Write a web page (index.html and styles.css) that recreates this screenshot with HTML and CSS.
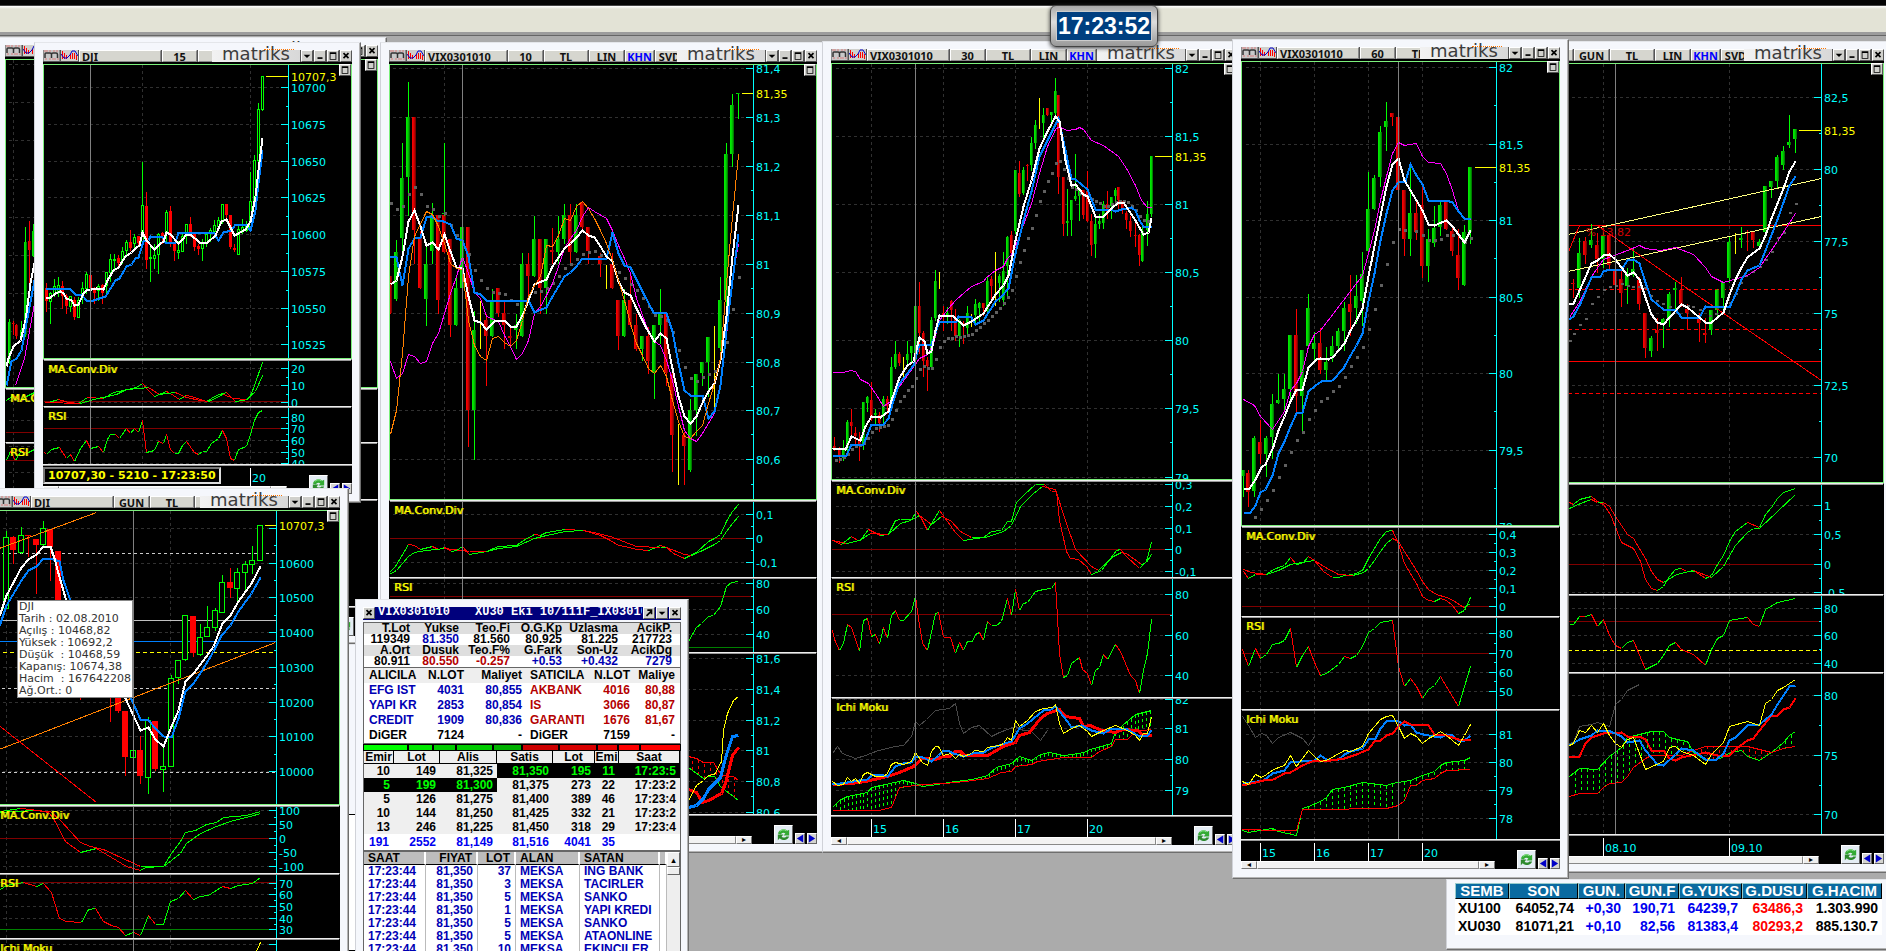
FILE: index.html
```html
<!DOCTYPE html>
<html lang="tr">
<head>
  <meta charset="UTF-8"/>
  <meta name="viewport" content="width=device-width, initial-scale=1.0"/>
  <title>Matriks - VIX / DJI</title>
  <link rel="stylesheet" href="styles.css">
</head>
<body>
<svg class="defs" width="0" height="0" aria-hidden="true">
  <defs>
    <linearGradient id="up"><stop offset="0" stop-color="#00f000"/><stop offset=".5" stop-color="#00d000"/><stop offset="1" stop-color="#006000"/></linearGradient>
    <linearGradient id="down"><stop offset="0" stop-color="#ff0000"/><stop offset=".5" stop-color="#d80000"/><stop offset="1" stop-color="#600000"/></linearGradient>
    <symbol id="i-m" viewBox="0 0 16 11">
      <rect width="16" height="11" fill="#c8c8c8"/>
      <path d="M1 1h3M6 1h2M10 1h1M13 1h1M2 9h2M6 9h2M9 9h4M14 9h1" stroke="#e33" stroke-dasharray="1 1"/>
      <path d="M1.500 8V4q0-1 1-1h4q1.500 0 1.500 1.500V8M8 4.500Q8 3 9.500 3h3q1.500 0 1.500 1.500V8" fill="none" stroke="#333" stroke-width="1.500"/>
    </symbol>
    <symbol id="i-wave" viewBox="0 0 17 11">
      <rect width="17" height="11" fill="#d0d0cc"/>
      <path d="M1.500 1v8M3.500 3v6M5.500 5v4M9.500 4v5M11.500 3v6M13.500 3v6M15.500 5v5" stroke="#f00"/>
      <path d="M0 4l3 4 3 0 3-3 2-4h3l3 5" fill="none" stroke="#00c"/>
    </symbol>
    <symbol id="i-refresh" viewBox="0 0 18 18">
      <path d="M3 8a6 6 0 0 1 10-3l2-1v6H9l2-2a3.500 3.500 0 0 0-5 1z" fill="#3a3"/>
      <path d="M15 11a6 6 0 0 1-10 2l-2 2V9h6l-2 2a3.500 3.500 0 0 0 5 0z" fill="#2d8a2d"/>
      <path d="M5 6a5 5 0 0 1 7-1" fill="none" stroke="#9e9"/>
    </symbol>
    <symbol id="i-drop" viewBox="0 0 12 11"><path d="M2 4h8L6 8z"/></symbol>
    <symbol id="i-min" viewBox="0 0 12 11"><path d="M3 7h6v2H3z"/></symbol>
    <symbol id="i-max" viewBox="0 0 12 11"><path d="M2 1h8v9H2zM3 3v6h6V3z" fill-rule="evenodd"/></symbol>
    <symbol id="i-close" viewBox="0 0 12 11"><path d="M3 2l6 6M9 2L3 8" stroke="#000" stroke-width="2"/></symbol>
    <symbol id="i-out" viewBox="0 0 12 11"><path d="M3 9l6-6M4 2h5v5" fill="none" stroke="#000" stroke-width="2"/></symbol>
    <symbol id="i-left" viewBox="0 0 10 10"><path d="M9 0v10L1 5z" fill="#0000c8"/></symbol>
    <symbol id="i-right" viewBox="0 0 10 10"><path d="M1 0v10l8-5z" fill="#0000c8"/></symbol>
  </defs>
</svg>

<main class="desktop">
  <div class="topbar"></div>

  <section class="win win-under"><div class="under-box"></div></section>

  <section class="win chart win-back" data-tabs="VIX0301010">
    <div class="pane main"><svg data-plot="back-main" viewBox="6 60 371 327"></svg></div>
    <div class="pane"><span class="tag">MA.Conv.Div</span><svg data-plot="back-ma" viewBox="6 390 371 52"></svg></div>
    <div class="pane"><span class="tag">RSI</span><svg data-plot="back-rsi" viewBox="6 444 371 55"></svg></div>
    <div class="pane"><svg data-plot="back-ichi" viewBox="6 501 371 105"></svg></div>
    <div class="strip"></div>
  </section>

  <section class="win chart win-dji15" data-tabs="DJI,15,">
    <div class="pane main"><svg data-plot="dji15-main" viewBox="44 65 307 293"></svg></div>
    <div class="pane"><span class="tag">MA.Conv.Div</span><svg data-plot="dji15-ma" viewBox="44 361 307 45"></svg></div>
    <div class="pane"><span class="tag">RSI</span><svg data-plot="dji15-rsi" viewBox="44 408 307 56"></svg></div>
    <div class="strip" data-dates="250:20"><output class="readout">10707,30 - 5210 - 17:23:50</output></div>
  </section>

  <section class="win chart win-djigun" data-tabs="DJI,GUN,TL,">
    <div class="pane main"><svg data-plot="djigun-main" viewBox="-4 511 343 293"></svg></div>
    <div class="pane"><span class="tag">MA.Conv.Div</span><svg data-plot="djigun-ma" viewBox="-4 807 343 66"></svg></div>
    <div class="pane"><span class="tag">RSI</span><svg data-plot="djigun-rsi" viewBox="-4 875 343 63"></svg></div>
    <div class="pane"><span class="tag">Ichi Moku</span><svg data-plot="djigun-ichi" viewBox="-4 940 343 80"></svg></div>
    <div class="tooltip">DJI
Tarih : 02.08.2010
Açılış : 10468,82
Yüksek : 10692,2
Düşük  : 10468,59
Kapanış: 10674,38
Hacim  : 167642208
Ağ.Ort.: 0</div>
  </section>

  <section class="win chart win-vix10" data-tabs="VIX0301010,10,TL,LIN,KHN,SVD">
    <div class="pane main"><svg data-plot="vix10-main" viewBox="390 65 426 434"></svg></div>
    <div class="pane"><span class="tag">MA.Conv.Div</span><svg data-plot="vix10-ma" viewBox="390 502 426 75"></svg></div>
    <div class="pane"><span class="tag">RSI</span><svg data-plot="vix10-rsi" viewBox="390 579 426 73"></svg></div>
    <div class="pane"><svg data-plot="vix10-ichi" viewBox="390 654 426 160"></svg></div>
    <div class="strip"></div>
  </section>

  <section class="win chart win-vix30" data-tabs="VIX0301010,30,TL,LIN,KHN">
    <div class="pane main"><svg data-plot="vix30-main" viewBox="832 64 404 415"></svg></div>
    <div class="pane"><span class="tag">MA.Conv.Div</span><svg data-plot="vix30-ma" viewBox="832 482 404 95"></svg></div>
    <div class="pane"><span class="tag">RSI</span><svg data-plot="vix30-rsi" viewBox="832 579 404 118"></svg></div>
    <div class="pane"><span class="tag">Ichi Moku</span><svg data-plot="vix30-ichi" viewBox="832 699 404 116"></svg></div>
    <div class="strip" data-dates="871:15,943:16,1015:17,1087:20" data-origin="832"></div>
  </section>

  <section class="win chart win-gun" data-tabs="VIX0301010,GUN,TL,LIN,KHN,SVD">
    <div class="pane main"><svg data-plot="gun-main" viewBox="1456 64 427 418"></svg></div>
    <div class="pane"><svg data-plot="gun-ma" viewBox="1456 485 427 109"></svg></div>
    <div class="pane"><svg data-plot="gun-rsi" viewBox="1456 596 427 76"></svg></div>
    <div class="pane"><svg data-plot="gun-ichi" viewBox="1456 674 427 160"></svg></div>
    <div class="strip" data-dates="1603:08.10,1729:09.10" data-origin="1456"></div>
  </section>

  <section class="win chart win-vix60" data-tabs="VIX0301010,60,TL">
    <div class="pane main"><svg data-plot="vix60-main" viewBox="1242 62 317 463"></svg></div>
    <div class="pane"><span class="tag">MA.Conv.Div</span><svg data-plot="vix60-ma" viewBox="1242 528 317 88"></svg></div>
    <div class="pane"><span class="tag">RSI</span><svg data-plot="vix60-rsi" viewBox="1242 618 317 91"></svg></div>
    <div class="pane"><span class="tag">Ichi Moku</span><svg data-plot="vix60-ichi" viewBox="1242 711 317 128"></svg></div>
    <div class="strip" data-dates="1260:15,1314:16,1368:17,1422:20" data-origin="1242"></div>
  </section>

  <section class="win win-ticker">
    <table class="ticker">
      <colgroup><col class="t1"><col class="t2"><col class="t3"><col class="t4"><col class="t5"><col class="t6"><col class="t7"></colgroup>
      <thead><tr><th>SEMB</th><th>SON</th><th>GUN.</th><th>GUN.F</th><th>G.YUKS</th><th>G.DUSU</th><th>G.HACIM</th></tr></thead>
      <tbody>
        <tr><td>XU100</td><td>64052,74</td><td class="b">+0,30</td><td class="b">190,71</td><td class="b">64239,7</td><td class="r">63486,3</td><td>1.303.990</td></tr>
        <tr><td>XU030</td><td>81071,21</td><td class="b">+0,10</td><td class="b">82,56</td><td class="b">81383,4</td><td class="r">80293,2</td><td>885.130.7</td></tr>
      </tbody>
    </table>
  </section>

  <section class="win win-quote">
    <header class="qtitle">
      <button class="ctl" aria-label="Kapat"><svg><use href="#i-close"/></svg></button>
      <div class="qname"><span class="qsym">VIX0301010</span><span>XU30 Eki 10/111F_IX0301010</span></div>
      <button class="ctl" aria-label="Ayır"><svg><use href="#i-out"/></svg></button>
      <button class="ctl" aria-label="Menü"><svg><use href="#i-drop"/></svg></button>
      <button class="ctl" aria-label="Kapat"><svg><use href="#i-close"/></svg></button>
    </header>
    <table class="q summary">
      <colgroup><col class="s1"><col class="s2"><col class="s3"><col class="s4"><col class="s5"><col class="s6"></colgroup>
      <tr class="h"><th>T.Lot</th><th>Yukse</th><th>Teo.Fi</th><th>O.G.Kp</th><th>Uzlasma</th><th>AcikP.</th></tr>
      <tr><td>119349</td><td class="b">81.350</td><td>81.560</td><td>80.925</td><td>81.225</td><td>217723</td></tr>
      <tr class="h"><th>A.Ort</th><th>Dusuk</th><th>Teo.F%</th><th>G.Fark</th><th>Son-Uz</th><th>AcikDg</th></tr>
      <tr><td>80.911</td><td class="r">80.550</td><td class="r">-0.257</td><td class="b">+0.53</td><td class="b">+0.432</td><td class="b">7279</td></tr>
    </table>
    <table class="q brokers">
      <colgroup><col class="k1"><col class="k2"><col class="k3"><col class="k4"><col class="k5"><col class="k6"></colgroup>
      <tr class="h"><th>ALICILA</th><th>N.LOT</th><th>Maliyet</th><th>SATICILA</th><th>N.LOT</th><th>Maliye</th></tr>
      <tr><td class="b">EFG IST</td><td class="b">4031</td><td class="b">80,855</td><td class="r">AKBANK</td><td class="r">4016</td><td class="r">80,88</td></tr>
      <tr><td class="b">YAPI KR</td><td class="b">2853</td><td class="b">80,854</td><td class="r">IS</td><td class="r">3066</td><td class="r">80,87</td></tr>
      <tr><td class="b">CREDIT</td><td class="b">1909</td><td class="b">80,836</td><td class="r">GARANTI</td><td class="r">1676</td><td class="r">81,67</td></tr>
      <tr><td>DiGER</td><td>7124</td><td>-</td><td>DiGER</td><td>7159</td><td>-</td></tr>
    </table>
    <div class="share">
      <i class="g1"></i><i class="g2"></i><i class="g3"></i><i class="g4"></i><i class="g5"></i>
      <i class="r1"></i><i class="r2"></i><i class="r3"></i><i class="r4"></i><i class="r5"></i>
    </div>
    <table class="q book">
      <colgroup><col class="o1"><col class="o2"><col class="o3"><col class="o4"><col class="o5"><col class="o6"><col class="o7"></colgroup>
      <tr class="h"><th>Emir</th><th>Lot</th><th>Alis</th><th>Satis</th><th>Lot</th><th>Emi</th><th>Saat</th></tr>
      <tr><td>10</td><td>149</td><td>81,325</td><td class="on">81,350</td><td class="on">195</td><td class="on">11</td><td class="on">17:23:5</td></tr>
      <tr><td class="on">5</td><td class="on">199</td><td class="on">81,300</td><td>81,375</td><td>273</td><td>22</td><td>17:23:2</td></tr>
      <tr><td>5</td><td>126</td><td>81,275</td><td>81,400</td><td>389</td><td>46</td><td>17:23:4</td></tr>
      <tr><td>10</td><td>144</td><td>81,250</td><td>81,425</td><td>332</td><td>21</td><td>17:23:2</td></tr>
      <tr><td>13</td><td>246</td><td>81,225</td><td>81,450</td><td>318</td><td>29</td><td>17:23:4</td></tr>
      <tr class="sum"><td>191</td><td>2552</td><td>81,149</td><td>81,516</td><td>4041</td><td>35</td><td></td></tr>
    </table>
    <div class="trades-row">
      <table class="q trades">
        <colgroup><col class="d1"><col class="d2"><col class="d3"><col class="d4"><col class="d5"><col></colgroup>
        <tr class="h"><th>SAAT</th><th>FIYAT</th><th>LOT</th><th>ALAN</th><th>SATAN</th><th></th></tr>
        <tr><td>17:23:44</td><td>81,350</td><td>37</td><td>MEKSA</td><td>ING BANK</td><td></td></tr>
        <tr><td>17:23:44</td><td>81,350</td><td>3</td><td>MEKSA</td><td>TACIRLER</td><td></td></tr>
        <tr><td>17:23:44</td><td>81,350</td><td>5</td><td>MEKSA</td><td>SANKO</td><td></td></tr>
        <tr><td>17:23:44</td><td>81,350</td><td>1</td><td>MEKSA</td><td>YAPI KREDI</td><td></td></tr>
        <tr><td>17:23:44</td><td>81,350</td><td>5</td><td>MEKSA</td><td>SANKO</td><td></td></tr>
        <tr><td>17:23:44</td><td>81,350</td><td>5</td><td>MEKSA</td><td>ATAONLINE</td><td></td></tr>
        <tr><td>17:23:44</td><td>81,350</td><td>10</td><td>MEKSA</td><td>EKINCILER</td><td></td></tr>
      </table>
      <div class="vscroll"><button aria-label="Yukarı">▴</button><div class="vthumb"></div></div>
    </div>
  </section>

  <div class="clock"><time>17:23:52</time></div>
</main>
<script src="script.js"></script>
</body>
</html>
```

FILE: styles.css
```css
body { margin:0; background:#ababab; font-family:"DejaVu Sans", Verdana, sans-serif; font-size:11px; }
button { font:inherit; padding:0; margin:0; }
.defs { position:absolute; }
.desktop { position:relative; width:100%; height:100vh; overflow:hidden; background:#ababab; }
.topbar {
  height:27px;
  border-top:5px solid #050505;
  background:linear-gradient(#444 1px, #fff 1px, #e3e3d6 4px);
  border-bottom:3px solid #9c9c9c;
  box-shadow:0 1px 0 #666;
}

/* windows */
.win {
  position:absolute;
  box-sizing:border-box;
  background:#f5f7fc;
  border:1px solid;
  border-color:#e4e6ea #6e6e6e #6e6e6e #d0d2d8;
  padding:7px 8px;
  box-shadow:inset -1px -1px 0 #b4b4b4;
}
.win-under { left:200px; top:644px; width:200px; height:340px; }
.under-box { margin-top:162px; height:135px; border:1px solid #000; border-right-style:dotted; background:#fff; }
.win-back { left:-4px; top:37px; width:391px; height:607px; }
.win-dji15 { left:34px; top:42px; width:327px; height:461px; }
.win-djigun { left:-14px; top:488px; width:363px; height:530px; }
.win-vix10 { left:380px; top:42px; width:446px; height:811px; }
.win-vix30 { left:822px; top:41px; width:424px; height:812px; }
.win-gun { left:1446px; top:41px; width:447px; height:832px; }
.win-vix60 { left:1232px; top:39px; width:337px; height:840px; }
.win-ticker { left:1446px; top:879px; width:445px; height:71px; padding:3px 8px; }
.win-quote { left:355px; top:599px; width:334px; height:400px; padding:7px; }

/* title bar */
.bar { display:flex; height:12px; background:#555; gap:1px; }
.bar .ico { flex:none; width:17px; height:11px; }
.tabs { display:flex; flex:1; min-width:0; gap:1px; }
.tab {
  flex:none; box-sizing:border-box; width:35px; height:12px; border:1px solid; border-color:#fff #888 #888 #fff;
  background:#d6d6cf; color:#111; font:bold 11px/11px "Noto Sans", sans-serif; text-align:center; white-space:nowrap;
}
.tab:first-child { width:82px; text-align:left; padding-left:2px; }
.tab:nth-child(3) { width:44px; }
.tab:nth-child(5) { width:29px; color:#00f; }
.tab:nth-child(6) { width:29px; }
.logo {
  position:relative; flex:none; width:88px; height:12px; color:#3c3c3c;
  background:linear-gradient(90deg, #f2f2f2, #d8d8d8);
  font:18px/8px "DejaVu Sans", sans-serif; text-align:center;
}
.logo::after { content:""; position:absolute; right:6px; top:-1px; width:30px; border-top:1px dotted #f70; }
.ctl {
  position:relative; flex:none; box-sizing:border-box; width:12px; height:12px; border:1px solid; border-color:#fff #555 #555 #fff;
  background:#d0d0cc; overflow:hidden;
}
.ctl svg { display:block; width:10px; height:10px; }

/* chart panes */
.panes { position:relative; background:#000; padding-top:2px; }
.pane { position:relative; border:solid #000; border-width:0 1px; background:#000; }
.pane + .pane, .strip { border-top:1px solid #eee; box-shadow:inset 0 1px 0 #999; padding-top:1px; }
.pane.main { border:1px solid #7cf07c; }
.pane svg { display:block; width:100%; }
.pane .pop { position:absolute; right:0; top:-1px; }
.tag { position:absolute; left:4px; top:3px; color:#ff0; line-height:14px; text-shadow:1px 0 #cc0; }
.axis-text { fill:#0ff; font-size:11px; }
.axis-last { fill:#ff0; font-size:11px; }
.axis-note { fill:#d00000; font-size:11px; }

.strip { position:relative; display:flex; align-items:flex-end; height:28px; background:#000; }
.timeline { flex:1; min-width:0; }
.timeline svg { display:block; width:100%; height:20px; }
.nav { display:flex; flex:none; width:65px; justify-content:flex-end; align-items:flex-end; gap:2px; }
.nav button { box-sizing:border-box; width:10px; height:11px; border:1px solid; border-color:#fff #666 #666 #fff; background:#d4d4d0; }
.nav .refresh { width:19px; height:19px; background:#e4ecf4; }
.nav svg { display:block; width:100%; height:100%; }
.hscroll { display:flex; height:8px; background:#e8e8e8; }
.hscroll button { flex:none; box-sizing:border-box; width:16px; height:8px; border:1px solid; border-color:#fff #777 #777 #fff; background:#eee; font-size:8px; line-height:6px; }
.hthumb { flex:1; border:1px solid; border-color:#fff #888 #888 #fff; background:#f2f2f2; }
.readout {
  position:absolute; left:0; top:2px; border:2px solid; border-color:#777 #ddd #ddd #777; background:#000;
  color:#ff0; font-weight:bold; line-height:13px; white-space:nowrap; padding:0 3px;
}
.tooltip {
  position:absolute; left:30px; top:111px; padding:0 1px; border:1px solid #888; background:#fff; color:#333;
  font-size:11px; line-height:12px; white-space:pre;
}

/* clock */
.clock {
  position:absolute; left:50%; top:5px; margin-left:107px; box-sizing:border-box; width:108px; height:42px;
  border:1px solid #444; border-radius:6px; padding:5px; background:linear-gradient(#aaa, #ddd 40%, #999);
  box-shadow:0 1px 4px #333;
}
.clock time {
  display:block; background:#003f80; border:1px solid #ccc; color:#fff; text-align:center;
  font:bold 23px/28px "Liberation Sans", Arial, sans-serif;
}

/* index table */
.ticker { width:100%; border-collapse:separate; border-spacing:0; table-layout:fixed; background:#fff; font:bold 14px/18px "Liberation Sans", Arial, sans-serif; }
.ticker th { background:#0a6aa0; color:#fff; height:14px; line-height:14px; padding:0; border:1px solid; border-color:#9cc #000 #000 #9cc; font-size:15px; }
.ticker td { padding:0 4px 0 0; text-align:right; white-space:nowrap; height:18px; }
.ticker td:first-child { text-align:left; padding-left:3px; }
.t1 { width:54px; } .t2 { width:69px; } .t3 { width:47px; } .t4 { width:54px; } .t5 { width:63px; } .t6 { width:65px; }
.ticker .b { color:#0000f0; }
.ticker .r { color:#f00; }

/* quote window */
.qtitle { display:flex; height:13px; gap:1px; background:#00007c; margin-bottom:2px; }
.qname { flex:1; min-width:0; overflow:hidden; white-space:nowrap; color:#fff; font:bold 12px/10px "Liberation Mono", monospace; padding-left:2px; }
.qsym { display:inline-block; width:97px; }
.q {
  width:100%; table-layout:fixed; border-collapse:separate; border-spacing:0; background:#fff; color:#000;
  font:bold 12px/14px "Liberation Sans", Arial, sans-serif;
}
.q th, .q td { padding:0; text-align:right; font-weight:inherit; white-space:nowrap; }
.q .b { color:#0000b4; }
.q .r { color:#b40000; }
.summary { border:1px solid #666; }
.summary .h { background:#dedede; }
.summary td, .summary th { height:11px; line-height:11px; }
.summary tr > :last-child { padding-right:8px; }
.s1 { width:46px; } .s2 { width:49px; } .s3 { width:51px; } .s4 { width:52px; } .s5 { width:56px; }
.brokers { line-height:15px; border:1px solid #666; border-top:0; }
.brokers .h { background:#eee; }
.brokers tr > :nth-child(3n+1) { text-align:left; padding-left:5px; }
.brokers tr > :nth-child(4) { padding-left:8px; }
.brokers tr > :last-child { padding-right:5px; }
.k1 { width:56px; } .k2 { width:44px; } .k3 { width:58px; } .k4 { width:66px; } .k5 { width:42px; }
.share { display:flex; gap:2px; height:5px; padding:1px; background:#000; }
.share i { display:block; background:#0c0; }
.share .g1 { flex:43; background:#0f0; } .share .g2 { flex:24; background:#00e800; } .share .g3 { flex:21; }
.share .g4 { flex:35; } .share .g5 { flex:27; background:#00b000; }
.share .r1 { flex:36; background:#c00; } .share .r2 { flex:36; background:#d80000; } .share .r3 { flex:19; background:#e80000; }
.share .r4 { flex:21; background:#f00; } .share .r5 { flex:39; background:#f00; }
.book { background:#efefef; border:1px solid #666; border-top:0; }
.book th { text-align:center; line-height:12px; border-right:1px solid #000; border-bottom:1px solid #000; }
.book td { padding-right:4px; }
.book .on { background:#000; color:#0f0; }
.book .sum td { background:#fff; color:#0000f0; line-height:16px; }
.book .sum td:first-child { text-align:left; padding-left:5px; }
.o1 { width:30px; } .o2 { width:46px; } .o3 { width:57px; } .o4 { width:56px; } .o5 { width:42px; } .o6 { width:24px; }
.trades-row { display:flex; border:1px solid #666; }
.trades { flex:1; line-height:13px; color:#0000b4; }
.trades th { background:#bdbdbd; color:#000; line-height:12px; border-right:2px solid #fff; border-bottom:1px solid #000; }
.trades td { border-right:1px solid #bbb; }
.trades tr > :nth-child(1), .trades tr > :nth-child(4), .trades tr > :nth-child(5) { text-align:left; padding-left:4px; }
.trades tr > :nth-child(2), .trades tr > :nth-child(3) { padding-right:4px; }
.d1 { width:62px; } .d2 { width:52px; } .d3 { width:38px; } .d4 { width:64px; } .d5 { width:80px; }
.vscroll { flex:none; width:13px; background:#eee; }
.vscroll button { display:block; box-sizing:border-box; width:13px; height:15px; border:1px solid; border-color:#fff #666 #666 #fff; background:#eee; font-size:9px; line-height:12px; }
.vthumb { height:6px; border:1px solid; border-color:#fff #666 #666 #fff; background:#eee; }
```

FILE: script.js
```js
const NS = 'http://www.w3.org/2000/svg';
const WHITE = '#fff', BLUE = '#0080ff', PINK = '#f0f', ORANGE = '#ff8000', YELLOW = '#ff0', RED = '#f00', GREEN = '#0f0';

// Every layer: at = origin, k = units per pixel on x and y
const C1 = { at: [0, 30], k: [3, 3] };
const C2 = { at: [0, 350], k: [3, 3] };
const C3 = { at: [0, 640], k: [3, 3] };
const V10 = { at: [380, 30], k: [3, 3] };
const V10B = { at: [380, 320], k: [3, 3] };
const LOW = { at: [680, 580], k: [2.8, 3] };
const V30 = { at: [820, 0], k: [3, 3] };
const V30B = { at: [820, 280], k: [3, 3] };
const V60 = { at: [1230, 30], k: [3, 3] };
const V60B = { at: [1230, 440], k: [3, 3] };
const G = { at: [1560, 30], k: [3, 1.702] };

const plots = {
  'back-main': { ...C1, axis: 940, left: 18, ticks: '103 217 331 448 562 676 790 904', grid: [40], cw: 9,
    candles: 'g 27 865 1000 878 990;r 40 870 912 880 882;r 50 880 925 885 920;g 65 870 930 900 925;g 76 590 920 637 915;r 88 570 760 634 660;g 101 580 680 605 680',
    lines: [[WHITE, 2, '18,1010 25,985 40,950 60,930 75,870 90,760 104,700'], [BLUE, 2, '18,1065 35,995 50,985 65,960 80,880 104,750'], [PINK, 1, '45,1065 60,1020 72,985 104,820']] },
  'back-ma': { ...C2, axis: 940, left: 18, ticks: '150 210', grid: [40], levels: [[247, '#800000']], lines: [['auto', 1, '18,150 40,135 60,150 80,138 103,127']] },
  'back-rsi': { ...C2, axis: 940, left: 18, ticks: '290 367', grid: [40], levels: [[331, '#800000']], lines: [['auto', 1, '18,330 30,305 45,330 65,300 80,310 103,297']] },
  'back-ichi': { ...C2, axis: 945, left: 18, ticks: '484:81,60 573:81,40 660:81,20 750:81,00' },

  'dji15-main': { ...C1, axis: 865, left: 135, ticks: '173:10700 284:10675 395:10650 503:10625 614:10600 725:10575 836:10550 944:10525', grid: [427, 751], cross: 271, last: [139, '10707,3', 795], cw: 9, hollow: true,
    candles: 'r 139 757 845 775 815;g 151 785 880 790 815;g 163 745 800 770 790;g 175 740 800 765 785;r 187 750 835 770 800;r 199 790 850 800 830;g 211 795 845 800 830;r 223 800 867 812 862;g 235 800 862 812 862;g 247 755 820 775 800;g 259 723 790 733 775;r 271 733 800 735 775;r 283 770 820 775 790;g 295 760 810 768 780;r 307 760 820 765 790;g 319 725 790 728 765;g 331 670 755 688 727;g 343 670 720 688 690;r 355 672 710 685 700;g 367 650 700 665 690;g 379 627 680 637 660;r 391 597 660 637 655;g 403 610 655 622 640;r 415 617 650 620 640;g 427 395 640 527 635;r 439 483 715 530 690;g 451 640 755 682 684;g 463 640 715 677 685;g 475 608 730 612 672;r 487 605 640 610 620;g 499 537 640 547 610;r 511 527 650 545 642;r 523 640 690 640 665;g 535 630 685 660 667;g 547 610 665 618 663;g 559 583 640 583 615;r 571 560 620 583 610;r 583 605 660 610 652;r 595 640 673 650 657;g 607 625 690 640 655;g 619 610 650 612 640;g 631 592 635 600 610;g 643 567 620 587 605;g 655 560 600 572 590;g 667 522 580 523 570;r 679 523 570 523 555;r 691 553 655 555 652;r 703 640 665 655 662;g 715 587 673 597 673;g 727 565 610 592 600;g 739 570 605 590 600;g 751 425 600 515 595;g 763 373 510 390 512;g 775 217 395 238 390;g 787 135 240 138 238',
    lines: [[BLUE, 2, '135,774 208,774 225,792 245,792 260,812 280,812 315,800 345,750 358,745 380,708 395,702 405,685 415,682 430,635 445,630 450,620 487,622 497,637 527,637 535,608 640,608 655,630 670,607 695,600 705,582 735,582 752,600 765,540 775,460 787,360'],
      [WHITE, 2, '135,803 150,803 165,790 180,785 190,790 200,805 215,810 223,825 235,822 250,790 260,780 290,776 310,777 325,745 340,720 355,712 375,680 395,668 405,655 418,645 428,608 440,630 463,657 480,640 490,635 500,608 510,612 535,640 550,625 560,613 572,613 597,636 622,636 645,615 665,575 678,568 688,585 702,615 715,610 735,598 750,575 765,500 775,420 787,325']] },
  'dji15-ma': { ...C2, axis: 865, left: 135, ticks: '55:20 107:10 157:0', grid: [427, 751], cross: 271, levels: [[154, '#800000']],
    lines: [['auto', 1, '132,158 145,158 175,148 205,158 235,161 262,143 310,145 340,127 370,120 410,113 428,101 445,122 463,139 485,130 500,123 520,135 537,148 560,135 575,140 620,153 650,135 680,127 705,153 745,148 760,115 788,37'],
      ['auto', 1, '135,158 240,160 280,148 350,133 380,118 420,115 445,112 478,132 525,127 560,142 600,150 625,153 670,133 700,145 740,148 765,125 788,75']] },
  'dji15-rsi': { ...C2, axis: 865, left: 135, ticks: '203:80 236:70 272:60 308:50 341:40', grid: [427, 751], cross: 271, levels: [[236, '#800000']],
    lines: [['auto', 1, '132,306 140,313 155,298 177,292 200,325 212,313 224,334 240,295 260,272 272,296 296,290 310,306 322,268 330,254 345,254 357,266 380,236 392,250 404,236 416,248 428,211 440,307 463,301 476,274 490,280 500,254 511,298 523,311 535,311 548,287 560,275 583,308 596,313 607,304 620,303 635,280 655,266 668,241 680,265 691,325 704,332 714,297 740,288 752,252 762,212 776,187 788,181']] },

  'djigun-main': { ...C2, axis: 829, left: 0, ticks: '535 640:10600 743:10500 848:10400 952:10300 1057:10200 1160:10100 1265:10000', grid: [20, 511], cross: 401, last: [527, '10707,3', 792], cw: 17, hollow: true,
    levels: [[811, '#c0c0c0'], [874, BLUE], [907, YELLOW, '4 3'], [610, '#ccc', '3 3'], [1015, '#ccc', '3 3'], [1267, '#ccc', '3 3']],
    candles: 'g 18 540 775 562 775;r 41 557 640 562 602;g 63 530 610 556 608;r 86 555 620 555 560;r 108 567 730 567 585;g 129 512 587 535 583;r 152 535 690 537 592;r 174 602 760 604 760;r 240 1000 1047 1000 1005;r 331 1000 1113 1000 1005;r 354 1000 1088 1000 1085;r 377 1083 1275 1083 1223;g 399 1163 1330 1201 1223;r 422 1155 1300 1200 1280;g 445 1100 1330 1110 1282;r 467 1110 1260 1113 1257;g 490 1190 1325 1250 1257;g 513 973 1250 985 1250;g 535 930 1000 932 982;g 557 792 930 796 928;r 579 798 920 798 910;g 601 820 915 862 913;g 623 765 860 832 860;g 645 773 840 781 832;g 668 672 788 697 788;r 690 652 743 697 715;g 713 652 750 667 715;g 735 632 720 643 667;g 758 587 670 632 643;g 780 527 632 527 632',
    lines: [[ORANGE, 1, '-12,599 288,487'], [ORANGE, 1, '-12,1201 826,877'], [RED, 1, '-12,1120 288,1357'],
      [BLUE, 2, '-12,850 0,820 20,765 63,690 85,662 108,648 130,624 152,624 177,635 190,690 212,752 360,1000 380,1015 420,1108 445,1110 467,1135 490,1160 513,1163 535,1105 557,1025 580,1000 610,955 640,905 665,855 690,825 715,785 755,730 780,683'],
      [WHITE, 2, '-12,820 0,790 20,735 63,653 85,627 108,612 130,590 152,590 163,625 175,670 200,755 330,960 377,1045 422,1142 445,1133 467,1167 490,1190 513,1130 535,1080 555,995 580,970 610,930 640,890 668,820 690,795 715,755 755,700 780,650']] },
  'djigun-ma': { ...C3, axis: 829, left: 0, ticks: '512:100 554:50 596:0 638:-50 680:-100', grid: [20, 511], cross: 401, levels: [[596, '#800000']],
    lines: [['auto', 1, '0,515 60,506 90,508 145,517 160,535 195,603 240,637 290,626 350,660 380,680 420,692 437,682 490,680 515,640 540,605 557,577 585,570 620,554 650,546 670,533 740,525 782,514'],
      ['auto', 1, '0,518 100,512 150,515 180,540 240,608 270,620 310,627 350,645 420,680 490,680 540,640 560,610 600,580 650,560 700,540 750,528 782,520']] },
  'djigun-rsi': { ...C3, axis: 829, left: 0, ticks: '729:70 764:60 800:50 835:40 869:30', grid: [20, 511], cross: 401, levels: [[728, '#800000'], [869, '#008000']],
    lines: [['auto', 1, '0,748 20,735 70,727 108,740 130,730 153,757 177,835 200,845 243,847 265,808 287,805 310,845 335,857 355,862 377,886 400,877 422,887 445,825 467,853 490,853 512,785 535,776 557,751 580,779 600,770 625,766 668,738 692,745 715,735 757,730 782,711']] },
  'djigun-ichi': { ...C3, axis: 829, left: 0, ticks: '912 960', grid: [20, 511], cross: 401, lines: [[YELLOW, 1, '765,940 782,908']] },

  'vix10-main': { ...V10, axis: 1120, left: 30, ticks: '116:81,4 262:81,3 409:81,2 556:81,1 703:81 850:80,9 997:80,8 1141:80,7 1288:80,6 1440', grid: [193], cross: 247, last: [190, '81,35', 1085], cw: 13,
    candles: 'r 32 740 850 740 850;g 49 627 810 667 808;g 67 337 680 445 625;g 85 153 555 262 443;r 103 262 700 262 600;r 120 600 775 625 775;g 139 640 885 703 808;g 157 518 700 556 665;r 175 556 850 556 812;r 193 556 667 556 667;g 193 337 556 550 552;r 211 627 920 627 885;g 229 740 885 775 885;g 247 592 860 592 775;r 265 592 1250 592 1140;g 283 840 1287 900 1140;y 302 810 955;r 319 850 1065 870 920;g 337 775 920 812 920;r 355 775 860 775 850;r 373 815 955 850 885;r 391 890 950 920 924;g 409 850 955 885 900;g 427 667 920 703 920;r 445 667 815 703 740;g 463 556 740 627 740;r 481 627 850 627 775;g 499 627 850 627 775;r 517 592 700 660 667;g 535 556 700 627 667;g 553 520 640 556 627;r 571 520 700 556 667;g 589 520 667 556 667;r 607 518 595 518 592;r 625 592 700 592 665;r 661 667 740 680 703;y 679 703 775;r 697 667 775 703 775;r 715 812 958 812 920;g 733 775 920 812 920;r 751 735 890 812 885;r 769 850 960 885 958;g 787 920 990 920 958;r 805 890 1030 920 995;g 823 885 1105 885 1030;g 841 775 940 850 885;r 859 850 1065 850 1030;r 877 1000 1325 1032 1215;y 895 1180 1362;r 913 1205 1362 1217 1250;g 931 1105 1325 1140 1322;g 949 1032 1215 1032 1140;g 967 996 1065 996 1030;g 985 922 1100 922 996;y 1003 885 1140;g 1021 740 960 812 955;g 1039 337 900 373 812;g 1057 190 408 226 372;g 1075 190 264 190 192',
    dots: '34,520 52,538 70,530 88,493 106,472 124,493 142,530 160,538 178,560 196,550 214,585 232,616 268,672 286,721 304,751 322,775 340,787 358,790 376,793 394,811 412,823 466,787 484,783 502,775 520,760 538,740 556,715 574,703 592,688 610,673 628,668 646,663 664,675 718,726 736,746 754,763 772,780 790,805 808,830 826,855 844,860 862,872 880,907 898,961 916,1012 934,1045 952,1054 970,1042 988,1033 1006,1023 1042,937 1060,838 1078,742',
    lines: [[PINK, 1, '30,993 50,1045 67,1030 85,973 103,980 122,1000 140,993 157,940 175,910 193,850 211,790 229,740 247,680 265,730 283,787 302,805 320,860 355,875 373,915 391,950 409,988 427,970 445,930 463,850 481,830 499,795 517,760 535,710 553,655 571,625 589,600 607,560 625,533 643,545 679,565 697,600 715,645 733,685 751,730 769,805 800,890 823,935 841,945 859,990 877,1050 895,1130 913,1200 931,1225 949,1233 967,1210 985,1180 1003,1150 1021,1070 1039,920 1057,740 1075,642'],
      [BLUE, 2, '30,680 50,682 67,765 85,655 103,625 122,622 139,562 155,560 170,572 190,573 211,583 229,625 247,632 265,680 283,787 302,792 320,812 445,812 463,847 499,833 517,800 553,740 571,727 589,710 607,684 679,684 697,608 715,670 733,705 751,712 787,785 820,848 859,850 877,905 895,1000 913,1080 931,1095 967,1095 985,1165 1003,1145 1021,1065 1039,900 1057,750 1075,612'],
      [WHITE, 2, '30,762 50,750 67,680 85,575 103,542 120,590 139,645 157,636 175,657 193,612 211,665 229,712 247,715 265,800 283,872 302,877 320,897 345,870 373,872 390,888 410,890 430,850 463,763 499,748 517,710 553,655 571,640 589,622 607,602 625,615 643,622 661,650 679,680 697,693 715,755 733,788 751,795 769,835 800,895 823,935 841,910 859,925 877,1015 895,1100 913,1160 931,1180 949,1160 970,1110 985,1085 1003,1060 1021,990 1039,860 1057,680 1075,527'],
      [ORANGE, 1, '30,1212 50,1140 67,970 85,740 103,620 139,545 157,553 175,590 193,640 211,700 229,715 247,718 265,870 283,945 302,980 320,990 337,925 355,918 373,938 391,950 409,930 427,870 445,800 463,765 481,740 499,645 517,650 535,615 553,565 571,570 589,530 607,515 625,535 643,565 661,600 679,640 697,690 715,750 733,810 751,880 770,940 787,975 805,1015 823,1030 841,1005 859,1040 877,1110 895,1175 913,1220 931,1225 949,1205 967,1185 985,1120 1003,1060 1021,985 1039,760 1057,560 1075,373']] },
  'vix10-ma': { ...V10B, axis: 1120, left: 30, ticks: '583:0,1 656:0 728:-0,1', grid: [193], cross: 247, levels: [[656, '#800000']],
    lines: [['auto', 1, '27,758 45,740 85,673 103,675 120,688 157,680 175,688 193,683 215,694 230,690 247,680 268,703 320,694 355,680 409,676 430,660 463,643 480,645 500,638 555,628 610,632 660,645 690,660 715,676 735,678 770,688 805,691 840,677 860,683 880,700 913,715 950,697 985,665 1003,655 1021,643 1039,605 1057,575 1075,553'],
      ['auto', 1, '27,764 50,750 85,708 103,697 140,690 193,685 240,690 268,693 320,695 355,685 410,680 463,655 500,647 555,634 610,632 640,636 690,650 770,680 840,683 860,683 913,703 935,706 960,695 1003,674 1021,662 1039,635 1057,610 1075,588']] },
  'vix10-rsi': { ...LOW, axis: 205, left: -811, ticks: '10:80 89:60 163:40', grid: [-660], cross: -609, levels: [[48, '#800000'], [202, '#008000']],
    lines: [['auto', 1, '-20,200 25,185 45,143 60,130 80,108 95,107 112,80 122,48 130,18 145,7 165,4']] },
  'vix10-ichi': { ...LOW, axis: 205, left: -811, ticks: '236:81,6 328:81,4 421:81,2 512:81 604:80,8 697:80,6', grid: [-660],
    cloud: ['0,550 25,562 65,596 80,588 97,590 112,620 165,662', '0,525 25,528 45,535 65,546 95,548 115,585 150,590 165,602', 17, RED],
    lines: [[RED, 3, '0,610 25,627 45,638 62,668 80,660 115,640 128,610 148,525 165,502'], [BLUE, 3, '0,690 25,683 45,675 65,655 80,628 112,593 122,555 132,515 148,470 165,467'], [YELLOW, 1, '0,680 25,660 45,615 65,600 80,585 97,582 115,545 122,450 132,400 150,360 165,349']] },

  'vix30-main': { ...V30, axis: 1057, left: 40, ticks: '205:82 409:81,5 613:81 817:80,5 1021:80 1225:79,5 1431:79', grid: [154, 370, 586, 802], cross: 287, last: [469, '81,35', 1002], cw: 8,
    candles: 'r 43 1308 1350 1340 1350;r 58 1340 1388 1350 1365;g 70 1318 1380 1350 1375;g 82 1258 1350 1267 1345;r 94 1224 1310 1267 1280;r 106 1280 1330 1300 1310;r 118 1295 1380 1320 1340;g 130 1207 1347 1207 1335;g 142 1185 1235 1193 1210;r 154 1143 1260 1200 1258;g 166 1225 1270 1240 1245;r 178 1235 1295 1245 1270;g 190 1185 1270 1197 1250;r 202 1185 1240 1197 1220;g 214 1070 1220 1103 1215;g 226 1020 1105 1062 1103;r 238 1053 1095 1062 1090;y 250 1070 1135;g 262 1020 1090 1062 1080;g 274 1035 1085 1040 1060;g 286 905 1060 918 1080;r 298 845 1060 918 1000;r 310 990 1130 1000 1085;r 322 1070 1172 1082 1100;g 334 950 1103 960 1103;g 346 808 960 845 955;y 358 815 865;r 370 915 990 940 945;g 382 920 970 940 945;r 394 897 990 905 930;r 406 925 1020 955 1010;g 418 955 1040 960 1010;r 430 960 1030 970 980;g 442 915 1005 940 985;y 454 940 980;g 466 895 970 912 945;g 478 905 960 910 925;r 490 908 945 910 925;g 502 825 935 845 935;r 514 825 900 838 858;y 526 755 915;g 538 820 905 830 850;g 550 755 915 815 900;g 562 705 885 713 800;r 574 690 770 705 760;g 586 510 700 510 695;r 598 480 590 520 582;g 610 500 582 510 580;r 622 490 540 497 500;g 634 408 510 430 497;g 646 357 445 377 430;y 658 293 385;g 670 323 415 345 370;r 682 325 345 325 345;g 694 335 380 337 345;g 706 233 345 273 340;r 716 285 580 285 532;r 729 530 705 532 672;g 741 565 705 663 670;g 753 597 705 600 660;g 766 460 600 590 598;g 778 563 660 570 590;r 790 567 655 572 645;r 802 510 665 575 663;r 814 640 765 663 737;g 826 640 773 672 733;g 838 640 685 665 672;g 850 600 685 613 670;r 862 570 655 612 640;g 874 588 655 592 620;g 886 562 610 572 590;r 895 562 630 563 600;r 907 600 640 605 630;r 919 630 685 640 662;r 931 645 710 663 695;r 947 665 738 705 708;r 958 700 795 705 765;g 967 675 785 693 785;g 983 600 735 643 690;g 993 468 650 468 643',
    dots: '50,1382 62,1377 74,1373 86,1363 98,1347 110,1340 122,1335 134,1330 146,1315 158,1297 170,1285 182,1283 194,1280 206,1275 218,1257 230,1230 242,1205 254,1190 265,1172 276,1158 288,1135 300,1108 312,1100 324,1104 336,1104 348,1077 360,1042 372,1024 384,1015 396,1014 408,1010 420,1012 432,1010 444,1007 456,1003 468,991 480,981 492,971 504,962 516,950 528,936 540,925 552,910 564,893 576,870 588,830 600,787 612,750 624,716 636,684 648,646 660,604 672,573 684,543 696,520 708,490 720,485 732,507 744,534 756,562 768,568 780,580 792,585 804,590 816,598 828,605 840,610 852,620 864,620 876,612 888,608 900,604 912,604 924,608 936,618 948,632 960,648 972,662 984,665',
    lines: [[PINK, 1, '38,1118 70,1116 90,1110 105,1115 120,1137 145,1150 165,1180 190,1218 210,1205 238,1160 262,1125 298,1075 322,1062 340,1030 358,960 385,925 410,898 454,860 490,843 500,832 526,812 550,798 562,775 575,762 586,740 634,610 658,520 682,440 706,388 718,380 740,391 765,387 777,381 790,388 815,420 850,435 895,468 920,505 947,555 965,600 983,623 995,622'],
      [BLUE, 2, '38,1367 80,1365 95,1332 130,1332 155,1272 190,1272 205,1255 220,1200 238,1150 262,1120 280,1095 298,1033 334,1033 358,965 410,965 416,950 454,953 466,972 490,962 526,905 545,890 565,865 586,760 610,660 634,575 658,470 682,420 700,385 716,355 735,450 753,535 766,538 802,567 826,627 870,627 886,635 905,627 935,622 947,630 958,660 970,680 995,680'],
      [WHITE, 2, '38,1345 75,1347 95,1310 120,1320 135,1280 155,1248 180,1253 205,1235 215,1200 238,1132 262,1095 280,1085 298,1013 312,1025 322,1060 334,1055 346,990 358,945 400,948 430,977 454,965 490,940 526,882 550,855 565,825 586,720 610,620 634,540 658,445 682,395 706,350 718,365 735,480 753,555 766,553 790,582 802,590 826,650 850,650 874,625 895,608 910,607 947,660 970,703 985,698 995,655']] },
  'vix30-ma': { ...V30B, axis: 1057, left: 40, ticks: '614:0,3 679:0,2 745:0,1 808:0 874:-0,1', grid: [154, 370, 586, 802], cross: 287, levels: [[808, '#800000']],
    lines: [['auto', 1, '37,780 65,793 93,770 118,783 144,748 180,767 205,762 225,720 240,718 275,717 290,693 305,715 322,750 358,692 405,758 430,782 490,772 515,755 545,752 562,725 575,724 588,668 610,645 645,614 672,613 695,633 708,635 718,720 738,815 752,835 775,838 800,860 815,883 845,870 888,811 902,808 920,828 958,865 980,845 994,787'],
      ['auto', 1, '37,780 80,790 118,780 150,760 205,762 240,730 270,722 297,706 333,732 365,708 390,722 420,755 455,773 495,772 550,755 575,735 600,680 640,640 668,618 705,628 735,720 765,808 815,860 835,870 880,830 905,817 920,820 965,852 980,848 994,822']] },
  'vix30-rsi': { ...LOW, axis: 1379, left: 430, ticks: '43:80 167:60 287:40', grid: [536, 737, 939, 1141], cross: 659, levels: [[103, '#800000']],
    lines: [['auto', 1, '427,150 433,178 447,212 457,190 469,132 480,142 503,213 514,120 525,115 537,168 546,162 558,193 569,143 581,175 593,107 603,90 614,121 626,121 648,95 659,50 668,115 680,190 692,210 714,100 725,96 738,172 758,173 771,220 782,187 793,210 805,184 818,183 828,162 838,156 850,180 862,125 873,136 885,136 900,123 917,55 928,107 940,28 951,92 962,70 973,68 995,35 1018,29 1040,24 1052,7 1063,220 1074,292 1085,285 1097,250 1119,232 1128,268 1140,280 1152,315 1163,270 1175,262 1186,223 1197,237 1220,193 1232,215 1260,285 1275,300 1286,340 1297,270 1309,220 1320,117']] },
  'vix30-ichi': { ...LOW, axis: 1379, left: 430, ticks: '359:82 445:81 539:80 631:79', grid: [536, 737, 939, 1141], cross: 659,
    cloud: ['427,682 447,662 470,650 525,637 537,623 575,612 625,600 659,610 680,618 720,612 770,603 820,597 862,585 885,563 928,550 950,530 985,540 1010,523 1035,517 1075,527 1100,523 1130,517 1150,507 1208,490 1220,455 1275,403 1320,391', '427,691 555,691 592,683 614,623 680,612 740,610 800,603 862,595 900,577 928,573 940,560 985,553 1000,543 1075,533 1152,531 1175,515 1208,500 1220,478 1252,478 1275,455 1320,448', 11, GREEN],
    lines: [['#484848', 1, '427,520 440,500 455,520 492,535 520,525 555,512 603,500 625,495 648,470 659,425 670,435 690,418 714,392 755,385 771,370 782,430 793,460 815,443 838,435 873,470 895,457 917,447 940,440 962,450 980,450 1008,480 1029,450'],
      [RED, 3, '427,613 480,610 520,603 582,590 614,577 655,560 680,535 714,537 738,530 755,530 770,513 785,513 797,525 860,525 905,500 940,487 951,465 978,457 1008,415 1030,400 1063,387 1080,410 1119,415 1130,438 1150,437 1180,450 1220,458 1240,448 1280,450 1297,465 1320,465'],
      [BLUE, 2, '427,612 470,608 503,602 525,597 540,583 560,583 582,588 603,560 625,550 648,547 659,530 680,532 703,545 725,525 738,510 750,510 765,520 793,528 830,518 850,517 875,503 928,485 951,445 973,430 1018,392 1040,388 1052,378 1063,395 1085,425 1097,443 1125,437 1152,450 1186,460 1208,445 1252,447 1286,468 1309,465 1320,450'],
      [YELLOW, 1, '427,605 440,615 458,613 470,593 480,605 492,595 503,610 514,582 525,577 546,590 570,590 582,580 592,553 603,548 625,553 648,545 659,517 680,548 692,557 703,515 714,500 725,500 738,525 758,520 770,535 782,523 793,530 815,520 825,512 850,515 862,502 895,495 905,490 917,472 928,480 940,422 951,440 973,420 995,395 1018,385 1042,382 1052,372 1063,430 1074,460 1097,445 1119,435 1140,455 1152,470 1186,450 1220,437 1252,450 1275,465 1286,482 1297,460 1309,460 1320,412']] },

  'vix60-main': { ...V60, axis: 799, left: 40, ticks: '112:82 343:81,5 571:81 802:80,5 1030:80 1260:79,5 1488:79', grid: [91, 253, 415, 577], cross: 505, last: [411, '81,35', 732], cw: 13,
    candles: 'g 40 1318 1400 1320 1340;r 56 1318 1430 1330 1388;g 73 1215 1400 1225 1385;r 91 1168 1300 1237 1272;g 109 1215 1340 1225 1272;g 127 1090 1285 1122 1223;g 145 1030 1120 1110 1120;g 163 1030 1145 1077 1108;g 181 915 1120 915 1077;r 199 835 1150 915 1100;g 217 960 1203 960 1098;g 235 790 950 835 950;g 253 905 990 940 958;r 271 892 1030 940 1020;g 289 950 1055 997 1020;g 307 915 995 950 980;g 325 892 960 903 950;g 343 813 960 835 903;r 361 732 915 822 847;g 379 732 880 800 835;g 397 663 885 733 813;g 415 423 665 537 663;g 433 433 537 445 537;g 451 285 468 307 443;g 469 215 362 273 293;r 487 250 285 250 262;r 505 262 480 262 480;r 523 480 675 480 627;g 541 400 675 550 627;r 559 515 627 550 607;r 577 458 742 525 710;g 595 595 755 627 708;g 613 525 650 595 640;g 631 510 615 525 593;r 649 512 597 512 597;r 667 583 675 605 665;r 685 595 777 675 745;g 703 583 765 607 765;g 721 411 640 411 608',
    dots: '76,1463 94,1437 112,1411 130,1380 148,1342 166,1305 184,1267 202,1230 220,1207 238,1168 256,1141 274,1114 292,1106 310,1085 328,1069 346,1042 364,1010 382,982 400,952 418,898 436,838 454,766 472,702 490,637 508,598 526,600 560,603 580,616 597,632 615,632 633,627 651,617 669,616 705,637 723,625',
    lines: [[PINK, 1, '40,1107 73,1127 91,1158 127,1197 163,1143 181,1080 199,1060 217,1025 235,950 253,912 271,900 397,735 415,670 433,600 451,510 469,440 487,370 505,338 523,346 560,340 577,378 595,397 631,400 649,430 667,480 685,540 703,568 721,567'],
      [BLUE, 2, '40,1448 60,1448 75,1425 91,1387 107,1377 127,1335 145,1270 163,1235 181,1190 200,1150 217,1148 235,1085 255,1065 273,1055 307,1052 340,1015 361,975 379,945 397,910 415,815 433,730 451,630 469,550 487,480 505,457 525,455 541,403 559,435 577,463 595,510 649,510 667,518 685,545 703,565 721,567'],
      [WHITE, 2, '40,1375 58,1375 75,1348 93,1312 107,1303 130,1250 145,1200 163,1160 181,1115 199,1077 217,1077 235,1012 260,988 271,984 295,988 310,980 343,940 361,900 379,870 397,835 415,740 433,650 451,560 469,470 487,403 505,385 523,450 560,510 577,540 595,583 613,585 649,572 667,590 703,638 721,600']] },
  'vix60-ma': { ...V60B, axis: 799, left: 40, ticks: '283:0,4 337:0,3 391:0,2 445:0,1 499:0', grid: [91, 253, 415, 577], cross: 505, levels: [[499, '#800000']],
    lines: [['auto', 1, '40,393 56,415 75,402 110,403 130,388 163,377 181,352 199,374 217,371 235,349 253,361 280,395 307,412 325,412 343,405 370,403 397,392 415,355 433,325 451,295 469,275 487,271 505,310 523,370 559,430 577,468 595,481 613,484 631,475 650,482 667,497 685,519 703,510 721,472'],
      ['auto', 1, '40,388 65,398 109,402 145,392 181,373 235,365 253,362 285,382 325,402 370,405 400,398 415,385 433,362 451,335 469,310 487,295 505,305 523,335 559,390 577,425 595,448 620,464 650,472 670,482 690,497 703,501 721,490']] },
  'vix60-rsi': { ...V60B, axis: 799, left: 40, ticks: '580:80 640:70 697:60 754:50', grid: [91, 253, 415, 577], cross: 505, levels: [[640, '#800000']],
    lines: [['auto', 1, '37,627 56,680 75,625 91,655 109,642 127,613 145,610 163,600 181,566 199,681 217,646 236,619 253,668 271,706 290,700 325,672 343,650 361,655 379,645 397,620 415,578 433,566 451,548 487,542 505,680 523,740 541,715 559,740 577,775 595,747 613,735 631,709 685,799 721,678']] },
  'vix60-ichi': { ...V60B, axis: 799, left: 40, ticks: '883:81 967:80 1051:79 1135:78', grid: [91, 253, 415, 577], cross: 505,
    cloud: ['37,1170 56,1178 91,1170 127,1165 145,1175 199,1186 217,1106 235,1100 271,1083 290,1073 307,1048 343,1042 397,1026 469,1036 487,1030 541,1020 577,1007 613,995 631,975 649,967 703,961 721,951', '37,1168 145,1172 199,1170 217,1108 300,1109 415,1105 469,1105 505,1097 523,1080 541,1037 559,1037 577,1022 613,1015 631,999 649,992 721,988', 18, GREEN],
    lines: [['#484848', 1, '37,830 56,855 75,893 93,880 109,887 127,909 145,893 181,876 217,895 235,915 253,888'],
      [BLUE, 2, '37,1027 60,1027 100,1020 127,1000 163,992 181,966 240,962 253,960 272,947 290,957 325,957 343,942 361,935 397,925 415,898 435,895 451,865 469,845 487,841 503,841 523,855 541,853 559,877 580,884 613,888 631,893 649,883 667,885 685,900 703,902 721,886'],
      [RED, 2, '37,1035 75,1028 100,1020 130,1018 163,1000 181,998 217,975 253,960 300,960 343,955 380,943 415,928 433,903 451,900 469,885 487,880 505,858 523,843 541,853 595,857 613,883 649,887 685,897 721,898'],
      [YELLOW, 1, '37,1025 56,1033 75,1003 95,1012 109,1003 130,988 163,975 181,946 199,978 235,931 253,950 271,965 290,960 343,932 361,935 397,918 415,880 451,838 469,828 487,826 505,860 523,895 541,880 559,888 577,910 595,895 613,887 631,875 649,885 685,915 703,885 721,852']] },

  'gun-main': { ...G, axis: 784, left: 27, ticks: '115:82,5 238:80 360:77,5 483:75 605:72,5 728:70', grid: [130, 508], cross: 166, last: [171, '81,35', 716], cw: 13, note: [76, 350, '% 13,82'],
    levels: [[332, RED], [564, RED], [442, RED, '4 3'], [510, RED, '4 3'], [619, RED, '4 3']],
    candles: 'r 41 423 455 432 434;g 58 354 455 380 440;r 76 352 398 360 384;g 94 330 370 358 367;r 112 345 412 367 390;g 130 345 405 350 390;r 148 350 410 350 400;r 166 400 440 408 435;r 184 410 470 425 448;g 202 405 465 418 436;g 220 370 420 408 418;r 238 420 475 427 467;r 256 483 558 483 542;g 274 520 555 525 547;r 292 490 545 512 517;g 310 490 540 492 500;g 328 445 505 450 492;g 346 428 475 440 443;r 364 420 470 443 467;r 382 465 510 475 483;r 418 480 530 490 500;r 436 490 532 517 520;g 454 475 518 478 512;g 472 440 488 443 477;g 490 428 480 430 457;g 508 352 430 362 423;y 526 345 380;g 544 335 370 355 358;r 562 340 375 345 347;r 580 343 370 345 358;g 598 355 370 362 368;g 615 265 345 267 345;g 634 257 285 258 268;g 652 212 268 217 258;g 670 197 238 207 230;g 688 143 200 192 196;g 706 170 208 170 186',
    dots: '30,530 43,518 61,503 79,493 97,467 115,456 133,443 151,438 169,437 187,433 205,437 220,438 238,438 256,440 274,453 292,462 310,468 330,472 385,470 400,472 420,478 450,488 470,485 490,482 510,465 530,450 545,432 560,420 580,412 600,405 618,393 636,378 654,355 672,347 690,312 708,297',
    lines: [['#ffff80', 1, '10,349 784,253'], ['#ffff80', 1, '10,412 784,318'], [RED, 1, '20,385 58,333'], [RED, 1, '112,333 364,433 784,596'],
      [PINK, 1, '27,490 60,460 94,420 130,390 202,375 238,366 256,372 300,376 346,370 400,382 436,405 454,420 490,430 562,417 598,405 652,360 706,313'],
      [BLUE, 2, '27,492 40,488 60,465 94,422 122,420 130,411 148,407 184,407 202,392 220,390 238,397 256,430 274,458 310,475 346,475 364,490 418,490 436,470 508,472 526,450 544,425 562,410 598,400 615,375 652,322 688,265 706,250'],
      [WHITE, 2, '27,467 40,465 60,440 94,397 112,393 130,384 148,382 166,390 184,405 202,417 220,412 238,425 256,455 274,485 292,497 310,502 328,490 364,467 382,472 436,497 454,497 490,480 508,450 526,425 544,405 562,388 598,372 615,350 634,320 670,270 688,240 706,223']] },
  'gun-ma': { ...G, axis: 784, left: 27, ticks: '809:1 859:0,5 910:0 958:-0,5', grid: [130, 508], cross: 166, levels: [[910, '#800000']],
    lines: [['auto', 1, '27,805 40,808 58,799 94,794 112,803 130,807 150,825 184,872 220,882 240,905 256,935 274,950 292,954 310,947 328,930 346,918 364,916 380,922 405,922 436,934 454,929 472,910 490,895 508,870 526,853 562,838 598,846 615,825 634,813 652,797 670,788 706,780'],
      ['auto', 1, '27,815 60,806 94,799 112,805 130,805 148,811 166,828 202,858 220,866 256,900 274,922 292,935 310,940 350,927 400,920 454,932 490,913 526,878 562,855 580,849 598,849 652,820 706,790']] },
  'gun-rsi': { ...G, axis: 784, left: 27, ticks: '984:80 1031:60 1078:40', grid: [130, 508], cross: 166, levels: [[1006, '#800000'], [1056, YELLOW, '4 3']],
    lines: [['auto', 1, '27,1012 40,1011 58,998 76,999 94,994 112,1015 130,1003 148,1030 166,1047 184,1053 202,1042 220,1039 256,1089 292,1078 310,1065 328,1047 346,1043 364,1055 400,1063 436,1081 454,1055 472,1036 490,1031 508,1005 562,1000 580,1011 598,1016 615,986 652,974 706,967']] },
  'gun-ichi': { ...G, axis: 784, left: 27, ticks: '1133:80 1235:75 1336:70', grid: [130, 508], cross: 166,
    cloud: ['27,1270 58,1257 112,1258 148,1236 184,1222 202,1205 274,1194 310,1194 328,1205 364,1210 382,1211 400,1230 436,1243 480,1240 510,1230 544,1226 562,1237 598,1243 634,1230 670,1213 688,1201 706,1194', '27,1304 58,1300 112,1300 130,1290 148,1282 184,1280 202,1270 220,1255 256,1240 274,1235 364,1235 400,1227 436,1220 508,1220 562,1220 634,1229 670,1223 706,1220', 18, GREEN],
    lines: [['#484848', 1, '27,1215 40,1212 58,1185 94,1182 112,1178 148,1185 166,1148 184,1140 202,1125 238,1114'],
      [RED, 2, '27,1238 58,1236 76,1215 94,1204 130,1198 184,1195 202,1202 238,1203 256,1207 274,1226 310,1227 328,1240 346,1244 364,1238 436,1230 472,1235 508,1235 526,1225 562,1210 580,1206 598,1192 634,1167 652,1166 670,1157 688,1153 706,1137'],
      [BLUE, 2, '27,1217 58,1207 94,1200 112,1193 150,1194 184,1202 202,1212 238,1210 256,1226 292,1250 310,1252 346,1233 364,1223 400,1227 436,1242 470,1242 490,1232 508,1210 526,1205 562,1183 598,1182 634,1165 652,1148 670,1132 688,1118 706,1115'],
      [YELLOW, 1, '27,1218 40,1215 58,1193 76,1195 94,1183 112,1196 130,1180 148,1200 166,1215 184,1222 202,1208 220,1205 256,1258 310,1245 328,1222 346,1220 364,1228 400,1235 436,1250 454,1233 490,1213 508,1185 562,1177 598,1184 615,1146 634,1140 652,1124 670,1119 706,1106']] }
};

function el(parent, name, attrs, text) {
  const e = document.createElementNS(NS, name);
  for (const k in attrs) e.setAttribute(k, attrs[k]);
  if (text !== undefined) e.textContent = text;
  parent.appendChild(e);
  return e;
}

function line(svg, x1, y1, x2, y2, stroke, dash, w) {
  const a = { x1, y1, x2, y2, stroke, 'stroke-width': w || 1 };
  if (dash) a['stroke-dasharray'] = dash;
  el(svg, 'line', a);
}

function pairs(s) {
  return s.split(' ').map(p => p.split(',').map(Number));
}

// y of a polyline at x
function yAt(pts, x) {
  for (let i = 1; i < pts.length; i++) {
    if (x <= pts[i][0]) {
      const [a, b] = pts[i - 1], [c, d] = pts[i];
      return b + (d - b) * (x - a) / (c - a);
    }
  }
  return pts[pts.length - 1][1];
}

function draw(svg, p) {
  const box = svg.viewBox.baseVal;
  const top = box.y, bottom = box.y + box.height;
  const X = x => Math.floor(p.at[0] + x / p.k[0]) + 0.5;
  const Y = y => Math.floor(p.at[1] + y / p.k[1]) + 0.5;
  const g = el(svg, 'g', { 'shape-rendering': 'crispEdges', fill: 'none' });
  const ax = X(p.axis);
  const ticks = p.ticks.split(' ').map(t => t.split(':'));

  ticks.forEach(t => line(g, X(p.left) + 2, Y(+t[0]), ax - 8, Y(+t[0]), '#303030', '3 3'));
  (p.grid || []).forEach(x => line(g, X(x), top, X(x), bottom, '#303030', '3 3'));
  (p.levels || []).forEach(l => line(g, box.x, Y(l[0]), ax, Y(l[0]), l[1], l[2]));

  if (p.cloud) {
    const up = pairs(p.cloud[0]), low = pairs(p.cloud[1]);
    for (let x = up[0][0] + p.cloud[2]; x < up[up.length - 1][0]; x += p.cloud[2]) {
      const a = yAt(up, x), b = yAt(low, x);
      line(g, X(x), Y(a), X(x), Y(b), p.cloud[3] === RED || a > b ? RED : GREEN, '3 3');
    }
    [[up, GREEN], [low, RED]].forEach(c => el(g, 'polyline', { points: c[0].map(q => X(q[0]) + ',' + Y(q[1])).join(' '), stroke: c[1] }));
  }

  if (p.candles) p.candles.split(';').forEach(row => {
    const [c, ...n] = row.split(' ');
    const [x, hi, lo, t, b] = n.map(Number);
    const col = c === 'g' ? GREEN : c === 'r' ? RED : YELLOW;
    line(g, X(x), Y(hi), X(x), Y(lo), col);
    if (c === 'y') return;
    const w = Math.round(p.cw / p.k[0]);
    const r = { x: X(x) - 0.5 - Math.floor(w / 2), y: Y(t) - 0.5, width: w, height: Math.max(1, Y(b) - Y(t)) };
    if (p.hollow && c === 'g') {
      el(g, 'rect', { x: r.x + 0.5, y: r.y + 0.5, width: w - 1, height: r.height, fill: '#000', stroke: GREEN });
    } else {
      el(g, 'rect', { ...r, fill: p.hollow ? RED : c === 'g' ? 'url(#up)' : 'url(#down)' });
    }
  });

  if (p.dots) pairs(p.dots).forEach(d => el(g, 'rect', { x: X(d[0]) - 1.5, y: Y(d[1]) - 1.5, width: 3, height: p.k[1] < 2 ? 2 : 3, fill: '#606060' }));

  (p.lines || []).forEach(([col, w, s]) => {
    const pts = pairs(s);
    if (col !== 'auto') {
      el(g, 'polyline', { points: pts.map(q => X(q[0]) + ',' + Y(q[1])).join(' '), stroke: col, 'stroke-width': w });
      return;
    }
    for (let i = 1; i < pts.length; i++) {
      const [a, b] = pts[i - 1], [c, d] = pts[i];
      line(g, X(a), Y(b), X(c), Y(d), d > b ? RED : GREEN);
    }
  });

  if (p.cross !== undefined) line(g, X(p.cross), top, X(p.cross), bottom, '#808080');

  // price axis
  line(g, ax, top, ax, bottom, '#00ffff');
  ticks.forEach((t, i) => {
    line(g, ax - 8, Y(+t[0]), ax, Y(+t[0]), '#00ffff');
    if (i) {
      const mid = Y((+t[0] + +ticks[i - 1][0]) / 2);
      line(g, ax - 3, mid, ax, mid, '#00ffff');
    }
    if (t[1]) el(svg, 'text', { x: ax + 2.5, y: Y(+t[0]) + 4.5, class: 'axis-text' }, t[1]);
  });
  if (p.last) {
    line(g, X(p.last[2]), Y(p.last[0]), ax - 1, Y(p.last[0]), YELLOW);
    el(svg, 'text', { x: ax + 2.5, y: Y(p.last[0]) + 4.5, class: 'axis-last' }, p.last[1]);
  }
  if (p.note) el(svg, 'text', { x: X(p.note[0]), y: Y(p.note[1]), class: 'axis-note' }, p.note[2]);
}

function ctl(icon, label) {
  return `<button class="ctl" aria-label="${label}"><svg><use href="#${icon}"/></svg></button>`;
}

document.querySelectorAll('.chart').forEach(win => {
  const panes = document.createElement('div');
  panes.className = 'panes';
  win.querySelectorAll(':scope > .pane, :scope > .strip').forEach(n => panes.appendChild(n));
  win.prepend(panes);

  const bar = document.createElement('header');
  bar.className = 'bar';
  bar.innerHTML = '<svg class="ico"><use href="#i-m"/></svg><svg class="ico"><use href="#i-wave"/></svg>' +
    '<div class="tabs">' + win.dataset.tabs.split(',').map(t => `<button class="tab">${t}</button>`).join('') + '</div>' +
    '<div class="logo">matriks</div>' +
    ctl('i-drop', 'Menü') + ctl('i-min', 'Küçült') + ctl('i-max', 'Büyüt') + ctl('i-close', 'Kapat');
  win.prepend(bar);

  win.querySelector('.main').insertAdjacentHTML('beforeend', '<button class="ctl pop" aria-label="Pencere"><svg><use href="#i-max"/></svg></button>');

  const strip = win.querySelector('.strip');
  if (!strip) return;
  strip.insertAdjacentHTML('beforeend',
    '<div class="timeline"><svg></svg><div class="hscroll"><button aria-label="Sola">◂</button><div class="hthumb"></div><button aria-label="Sağa">▸</button></div></div>' +
    '<div class="nav"><button class="refresh" aria-label="Yenile"><svg><use href="#i-refresh"/></svg></button>' +
    '<button aria-label="Geri"><svg><use href="#i-left"/></svg></button><button aria-label="İleri"><svg><use href="#i-right"/></svg></button></div>');
  const svg = strip.querySelector('.timeline svg');
  const from = +(strip.dataset.origin || 44) - 1;
  (strip.dataset.dates || '').split(',').filter(Boolean).forEach(d => {
    const [x, label] = d.split(':');
    line(svg, +x - from + 0.5, 2, +x - from + 0.5, 20, '#fff');
    el(svg, 'text', { x: +x - from + 2, y: 16, class: 'axis-text' }, label);
  });
});

document.querySelectorAll('svg[data-plot]').forEach(svg => draw(svg, plots[svg.dataset.plot]));
```
